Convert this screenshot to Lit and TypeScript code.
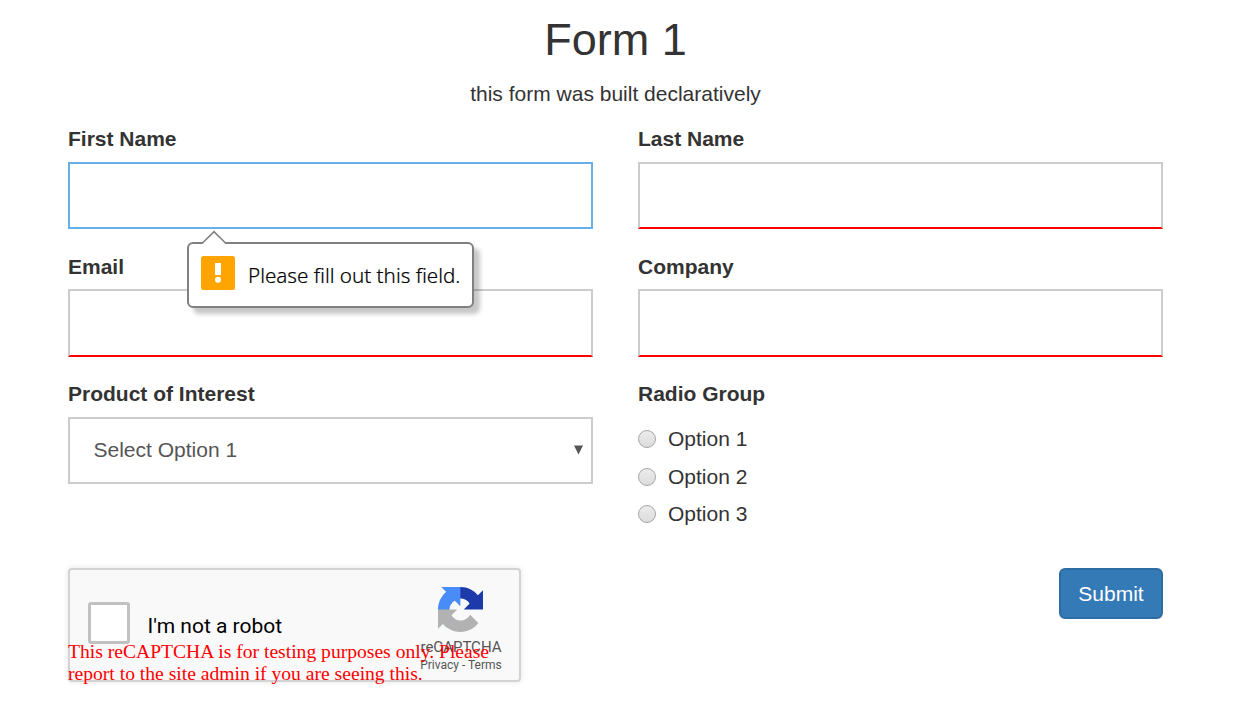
import { LitElement, html, css } from "lit";
import { customElement, property } from "lit/decorators.js";

@customElement("form-field")
class FormField extends LitElement {
  @property() label = "";
  @property() state = "";

  static styles = css`
    :host { display: block; position: relative; height: 127.5px; }
    .label { display: block; height: 30px; line-height: 30px; font-weight: 700; margin-bottom: 7.5px; color: #333; }
    .input {
      display: block; box-sizing: border-box; width: 100%; height: 67.5px; padding: 0 24px;
      border: 2px solid #ccc; border-radius: 0; background: #fff; outline: none; font: inherit; color: #555;
    }
    .invalid { border-bottom-color: #f00; }
    .active { border-color: #66afe9; }
  `;

  render() {
    return html`
      <label class="label" for="control">${this.label}</label>
      <slot><input id="control" class="input ${this.state}" type="text" /></slot>
    `;
  }
}

@customElement("validation-tip")
class ValidationTip extends LitElement {
  static styles = css`
    :host {
      position: absolute; left: 119px; top: 118px; z-index: 2; box-sizing: border-box;
      width: 287px; height: 66px; padding: 0 11px 0 12px;
      display: flex; align-items: center; border: 2px solid #808080; border-radius: 6px;
      background: #fff; box-shadow: 6px 6px 4px rgba(0, 0, 0, 0.22);
      font: 20.6px/28px "Noto Sans", sans-serif; color: #000;
    }
    .arrow { position: absolute; left: 11px; top: -14px; }
    .badge { flex: none; margin: -4px 13px 0 0; }
    .text { white-space: nowrap; font-weight: 300; padding-bottom: 1px; -webkit-text-stroke: 0.2px #000; }
  `;

  render() {
    return html`
      <svg class="arrow" width="28" height="15" viewBox="0 0 28 15">
        <path d="M1 15 14 2 27 15Z" fill="#fff" />
        <path d="M2 13.5 14 1.7 26 13.5" fill="none" stroke="#808080" stroke-width="1.6" />
      </svg>
      <svg class="badge" width="34" height="34" viewBox="0 0 34 34">
        <rect width="34" height="34" rx="2.5" fill="#ffa400" />
        <path d="M14 7h6v12h-6z" fill="#fff" />
        <circle cx="17" cy="23.8" r="3" fill="#fff" />
      </svg>
      <span class="text">Please fill out this field.</span>
    `;
  }
}

@customElement("captcha-box")
class CaptchaBox extends LitElement {
  static styles = css`
    :host {
      position: relative; display: flex; justify-content: space-between; box-sizing: border-box;
      width: 453px; height: 114px; border: 2px solid #d3d3d3; border-radius: 4px;
      background: #f9f9f9; box-shadow: 0 0 5px 1px rgba(0, 0, 0, 0.08);
      font-family: Roboto, sans-serif;
    }
    .check { display: flex; padding: 32px 0 0 18px; }
    .box { box-sizing: border-box; width: 42px; height: 42px; border: 3px solid #c1c1c1; border-radius: 3px; background: #fff; }
    .prompt { margin: 9px 0 0 17.5px; font-size: 21px; line-height: 30px; color: #000; white-space: nowrap; }
    .brand { width: 84px; padding: 17px 16px 0 0; display: flex; flex-direction: column; align-items: center; color: #555; }
    .logo { margin-right: 1px; }
    .name { margin-top: 6px; font-size: 15px; line-height: 18px; white-space: nowrap; }
    .links { font-size: 12px; line-height: 18px; white-space: nowrap; }
    .warning {
      position: absolute; left: -2px; top: 71px; width: 453px; margin: 0;
      font: 19.6px/22px "Liberation Serif", serif; color: #f00; white-space: nowrap;
    }
  `;

  render() {
    return html`
      <div class="check"><span class="box"></span><span class="prompt">I'm not a robot</span></div>
      <div class="brand">
        <svg class="logo" width="45" height="45" viewBox="0 0 64 64">
          <path fill="#1c3aa9" d="M64 31.955l-.033-1.37V4.687l-7.16 7.16C50.948 4.674 42.033.093 32.05.093c-10.4 0-19.622 4.96-25.458 12.64l11.736 11.86a15.55 15.55 0 0 1 4.754-5.334c2.05-1.6 4.952-2.906 8.968-2.906.485 0 .86.057 1.135.163 4.976.393 9.288 3.14 11.828 7.124l-8.307 8.307L64 31.953" />
          <path fill="#4a8cf7" d="M31.862.094l-1.37.033H4.594l7.16 7.16C4.58 13.147 0 22.06 0 32.046c0 10.4 4.96 19.622 12.64 25.458L24.5 45.768a15.55 15.55 0 0 1-5.334-4.754c-1.6-2.05-2.906-4.952-2.906-8.968 0-.485.057-.86.163-1.135.393-4.976 3.14-9.288 7.124-11.828l8.307 8.307L31.86.095" />
          <path fill="#b2b2b2" d="M.001 32.045l.033 1.37v25.898l7.16-7.16c5.86 7.173 14.774 11.754 24.76 11.754 10.4 0 19.622-4.96 25.458-12.64l-11.736-11.86a15.55 15.55 0 0 1-4.754 5.334c-2.05 1.6-4.952 2.906-8.968 2.906-.485 0-.86-.057-1.135-.163-4.976-.393-9.288-3.14-11.828-7.124l8.307-8.307c-10.522.04-22.4.066-27.295-.005" />
        </svg>
        <span class="name">reCAPTCHA</span>
        <span class="links">Privacy - Terms</span>
      </div>
      <p class="warning">This reCAPTCHA is for testing purposes only. Please<br />report to the site admin if you are seeing this.</p>
    `;
  }
}

@customElement("app-root")
class AppRoot extends LitElement {
  static styles = css`
    :host {
      display: block; box-sizing: border-box; width: 1239px; height: 722px; overflow: hidden;
      padding: 15px 76px 0 68px; background: #fff;
      font: 21px/30px "Liberation Sans", Arial, sans-serif; color: #333;
    }
    .title { margin: 0; font-size: 45px; line-height: 50px; font-weight: 400; text-align: center; }
    .intro { margin: 14px 0 15px; text-align: center; }
    .grid { display: grid; grid-template-columns: 525px 525px; column-gap: 45px; }
    .first { position: relative; }
    .select {
      box-sizing: border-box; height: 67.5px; padding: 0 7px 0 23.5px; border: 2px solid #ccc;
      display: flex; align-items: center; justify-content: space-between; color: #555;
    }
    .options { padding-top: 7.5px; }
    .option { display: flex; align-items: center; height: 30px; margin-bottom: 7.5px; }
    .dot {
      box-sizing: border-box; width: 18px; height: 18px; margin-right: 12px; border: 1px solid #a6a6a6;
      border-radius: 50%; background: linear-gradient(#ececec, #dcdcdc);
    }
    .footer { display: flex; justify-content: space-between; align-items: flex-start; margin-top: 61.5px; }
    .submit {
      box-sizing: border-box; width: 104px; height: 51px; padding: 1px 0 0; border: 2px solid #2e6da4;
      border-radius: 6px; background: #337ab7; color: #fff; font: inherit;
    }
  `;

  render() {
    return html`
      <h1 class="title">Form 1</h1>
      <p class="intro">this form was built declaratively</p>
      <div class="grid">
        <div class="first">
          <form-field label="First Name" state="active"></form-field>
          <validation-tip></validation-tip>
        </div>
        <form-field label="Last Name" state="invalid"></form-field>
        <form-field label="Email" state="invalid"></form-field>
        <form-field label="Company" state="invalid"></form-field>
        <form-field label="Product of Interest">
          <div class="select">
            <span>Select Option 1</span>
            <svg width="11" height="10" viewBox="0 0 11 10"><path d="M1 .5h9L5.5 9.5z" fill="#555" /></svg>
          </div>
        </form-field>
        <form-field label="Radio Group">
          <div class="options">
            ${[1, 2, 3].map((n) => html`<div class="option"><span class="dot"></span>Option ${n}</div>`)}
          </div>
        </form-field>
      </div>
      <div class="footer">
        <captcha-box></captcha-box>
        <button class="submit" type="button">Submit</button>
      </div>
    `;
  }
}
